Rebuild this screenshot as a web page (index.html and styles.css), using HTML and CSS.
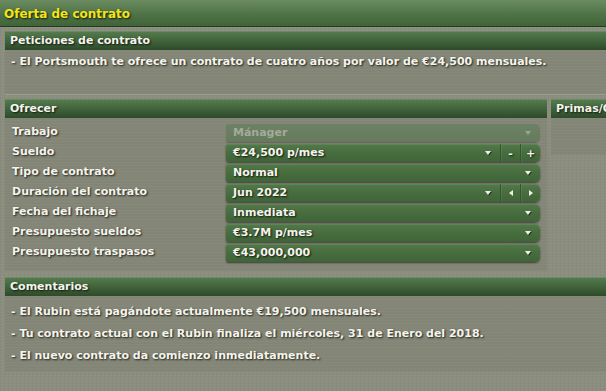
FILE: index.html
```html
<!DOCTYPE html>
<html>
<head>
    <meta charset="UTF-8">
    <title>Oferta de contrato</title>
    <link rel="stylesheet" href="styles.css">
</head>
<body>
    <div class="title-bar">Oferta de contrato</div>

    <div class="panel">
        <div class="panel-head">Peticiones de contrato</div>
        <div class="panel-body requests">
            <p>- El Portsmouth te ofrece un contrato de cuatro años por valor de €24,500 mensuales.</p>
        </div>
    </div>

    <div class="offer-row">
        <div class="panel offer">
            <div class="panel-head">Ofrecer</div>
            <div class="panel-body offer-body">
                <div class="field">
                    <span class="label">Trabajo</span>
                    <div class="select disabled"><span class="value">Mánager</span><span class="arrow"></span></div>
                </div>
                <div class="field">
                    <span class="label">Sueldo</span>
                    <div class="select split">
                        <span class="value">€24,500 p/mes</span><span class="arrow"></span>
                        <span class="btn">-</span><span class="btn">+</span>
                    </div>
                </div>
                <div class="field">
                    <span class="label">Tipo de contrato</span>
                    <div class="select"><span class="value">Normal</span><span class="arrow"></span></div>
                </div>
                <div class="field">
                    <span class="label">Duración del contrato</span>
                    <div class="select split">
                        <span class="value">Jun 2022</span><span class="arrow"></span>
                        <span class="btn"><span class="tri-left"></span></span><span class="btn"><span class="tri-right"></span></span>
                    </div>
                </div>
                <div class="field">
                    <span class="label">Fecha del fichaje</span>
                    <div class="select"><span class="value">Inmediata</span><span class="arrow"></span></div>
                </div>
                <div class="field">
                    <span class="label">Presupuesto sueldos</span>
                    <div class="select"><span class="value">€3.7M p/mes</span><span class="arrow"></span></div>
                </div>
                <div class="field">
                    <span class="label">Presupuesto traspasos</span>
                    <div class="select"><span class="value">€43,000,000</span><span class="arrow"></span></div>
                </div>
            </div>
        </div>

        <div class="panel bonus">
            <div class="panel-head">Primas/Cláusulas</div>
            <div class="panel-body bonus-body"></div>
        </div>
    </div>

    <div class="panel">
        <div class="panel-head">Comentarios</div>
        <div class="panel-body comments">
            <p>- El Rubin está pagándote actualmente €19,500 mensuales.</p>
            <p>- Tu contrato actual con el Rubin finaliza el miércoles, 31 de Enero del 2018.</p>
            <p>- El nuevo contrato da comienzo inmediatamente.</p>
        </div>
    </div>
</body>
</html>
```

FILE: styles.css
```css
html, body {
    margin: 0;
    width: 606px;
    height: 391px;
    overflow: hidden;
}

body {
    background-color: #8b8d7e;
    background-image:
        repeating-linear-gradient(0deg, rgba(255,255,255,0.03) 0 1px, transparent 1px 3px),
        repeating-linear-gradient(90deg, rgba(0,0,0,0.03) 0 1px, transparent 1px 4px);
    font-family: 'DejaVu Sans', 'Liberation Sans', sans-serif;
    font-weight: bold;
    font-size: 11px;
    color: #f4f4ec;
    text-shadow: 1px 1px 2px rgba(0,0,0,0.8);
}

p {
    margin: 0;
}

.title-bar {
    height: 26px;
    line-height: 29px;
    padding-left: 4px;
    font-size: 12px;
    color: #f2e619;
    background: linear-gradient(#6a8c60, #4f7246 55%, #406337);
    border-bottom: 1px solid #243a20;
    text-shadow: 1px 1px 2px rgba(0,0,0,0.8);
}

.panel {
    margin: 4px 0 0 5px;
}

.panel-head {
    height: 19px;
    line-height: 19px;
    padding-left: 5px;
    white-space: nowrap;
    overflow: hidden;
    background: linear-gradient(#567c4f, #42653c 50%, #2e4a2a);
    box-shadow: inset 0 1px 0 rgba(255,255,255,0.12);
}

.panel-body {
    background-color: #838676;
    background-image:
        repeating-linear-gradient(0deg, rgba(255,255,255,0.03) 0 1px, transparent 1px 3px);
}

.requests {
    height: 45px;
    padding: 3px 0 0 6px;
    box-sizing: border-box;
    line-height: 18px;
    border-bottom: 1px solid #9a9c8d;
}

.offer-row {
    display: flex;
    gap: 4px;
    margin: 4px 0 0 5px;
}

.offer-row .panel {
    margin: 0;
}

.offer {
    width: 542px;
    flex: none;
}

.offer-body {
    padding: 6px 7px 9px 7px;
    display: flex;
    flex-direction: column;
    gap: 2px;
}

.field {
    display: grid;
    grid-template-columns: 214px 314px;
    align-items: center;
    height: 18px;
}

.label {
    line-height: 14px;
    margin-top: -3px;
}

.select {
    display: flex;
    align-items: center;
    height: 18px;
    border-radius: 2px 5px 5px 2px;
    background: linear-gradient(#53794a, #486d3f 45%, #3f6437);
    box-shadow: 0 1px 2px rgba(0,0,0,0.55), inset 0 1px 0 rgba(255,255,255,0.08);
}

.select .value {
    flex: 1;
    padding-left: 7px;
    line-height: 18px;
}

.arrow {
    width: 0;
    height: 0;
    margin-right: 9px;
    border-left: 3px solid transparent;
    border-right: 3px solid transparent;
    border-top: 4px solid #f0f0e8;
    filter: drop-shadow(1px 1px 0 rgba(0,0,0,0.5));
}

.btn {
    width: 19px;
    height: 18px;
    border-left: 1px solid #35552f;
    box-shadow: inset 1px 0 0 rgba(255,255,255,0.08);
    display: flex;
    align-items: center;
    justify-content: center;
}

.split .btn:first-of-type {
    color: #a8b8a0;
}

.tri-left, .tri-right {
    width: 0;
    height: 0;
    border-top: 3px solid transparent;
    border-bottom: 3px solid transparent;
}

.tri-left {
    border-right: 4px solid #f0f0e8;
}

.tri-right {
    border-left: 4px solid #f0f0e8;
}

.disabled {
    background: linear-gradient(#6d8164, #667b5c);
    color: #a3ab9b;
    text-shadow: none;
    box-shadow: 0 1px 1px rgba(0,0,0,0.25);
}

.disabled .arrow {
    border-top-color: #9aa692;
    filter: none;
}

.bonus {
    width: 200px;
    flex: none;
}

.bonus-body {
    height: 37px;
}

.offer-row + .panel {
    margin-top: 6px;
}

.comments {
    padding: 5px 0 5px 6px;
    line-height: 22px;
}
```
